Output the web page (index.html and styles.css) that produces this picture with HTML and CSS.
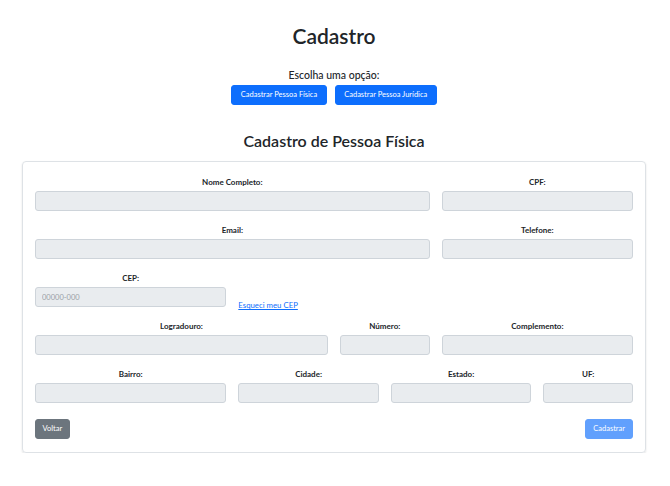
FILE: index.html
```html
<!DOCTYPE html>
<html lang="pt-BR">
<head>
<meta charset="utf-8">
<title>Cadastro</title>
<link rel="stylesheet" href="styles.css">
</head>
<body>
<div class="page">
  <h1 class="title">Cadastro</h1>
  <p class="choose">Escolha uma opção:</p>
  <div class="choices">
    <button class="btn btn-primary">Cadastrar Pessoa Física</button>
    <button class="btn btn-primary">Cadastrar Pessoa Jurídica</button>
  </div>
  <h2 class="subtitle">Cadastro de Pessoa Física</h2>
  <form class="card">
    <div class="grid">
      <div class="field c8"><label>Nome Completo:</label><input class="input" type="text"></div>
      <div class="field c4"><label>CPF:</label><input class="input" type="text"></div>

      <div class="field c8"><label>Email:</label><input class="input" type="text"></div>
      <div class="field c4"><label>Telefone:</label><input class="input" type="text"></div>

      <div class="field c4"><label>CEP:</label><input class="input" type="text" placeholder="00000-000"></div>
      <div class="field c8 linkcell"><a href="#" class="link">Esqueci meu CEP</a></div>

      <div class="field c6"><label>Logradouro:</label><input class="input" type="text"></div>
      <div class="field c2"><label>Número:</label><input class="input" type="text"></div>
      <div class="field c4"><label>Complemento:</label><input class="input" type="text"></div>

      <div class="field c4"><label>Bairro:</label><input class="input" type="text"></div>
      <div class="field c3"><label>Cidade:</label><input class="input" type="text"></div>
      <div class="field c3"><label>Estado:</label><input class="input" type="text"></div>
      <div class="field c2"><label>UF:</label><input class="input" type="text"></div>
    </div>
    <div class="actions">
      <button type="button" class="btn btn-secondary">Voltar</button>
      <button type="button" class="btn btn-primary disabled">Cadastrar</button>
    </div>
  </form>
</div>
</body>
</html>
```
FILE: styles.css
```css
* { box-sizing: border-box; }
html, body { margin: 0; padding: 0; background: #fff; }
body {
  font-family: "Lato", "Noto Sans", sans-serif;
  color: #212529;
}
.page {
  padding: 23px 24px 0 22px;
  display: flex;
  flex-direction: column;
  align-items: center;
}
.title {
  margin: 0;
  font-size: 21px;
  font-weight: 600;
  line-height: 26px;
}
.choose {
  margin: 19px 0 0;
  font-size: 10.5px;
  font-weight: 500;
  line-height: 14px;
}
.choices {
  margin-top: 3px;
  display: flex;
  gap: 8px;
}
.btn {
  font-family: inherit;
  border: 1px solid transparent;
  border-radius: 3px;
  height: 20px;
  padding: 0 8.5px;
  font-size: 7.5px;
  line-height: 18px;
  color: #fff;
  cursor: pointer;
}
.btn-primary { background: #0d6efd; border-color: #0d6efd; }
.btn-primary.disabled { opacity: 0.65; padding: 0 7px; }
.btn-secondary { background: #6c757d; border-color: #6c757d; padding: 0 6.5px; }
.subtitle {
  margin: 25px 0 0;
  font-size: 16px;
  font-weight: 600;
  line-height: 22px;
}
.card {
  align-self: stretch;
  margin-top: 9px;
  border: 1px solid #dee2e6;
  border-radius: 4px;
  box-shadow: 0 1px 2px rgba(0,0,0,0.12);
  padding: 13px 12px 13px;
}
.grid {
  display: grid;
  grid-template-columns: repeat(12, 1fr);
  column-gap: 12px;
  row-gap: 12px;
}
.c2 { grid-column: span 2; }
.c3 { grid-column: span 3; }
.c4 { grid-column: span 4; }
.c6 { grid-column: span 6; }
.c8 { grid-column: span 8; }
.field {
  display: flex;
  flex-direction: column;
  align-items: stretch;
}
.field label {
  text-align: center;
  font-size: 8px;
  font-weight: 700;
  line-height: 12px;
  margin-top: 1px;
  margin-bottom: 3px;
}
.input {
  display: block;
  width: 100%;
  height: 20px;
  background: #e9ecef;
  border: 1px solid #ced4da;
  border-radius: 3px;
  font-family: inherit;
  font-size: 7.5px;
  padding: 0 6px;
  color: #212529;
}
.input::placeholder { color: #9aa0a6; }
.linkcell {
  justify-content: flex-end;
  align-items: flex-start;
}
.link {
  font-size: 7.8px;
  color: #0d6efd;
  text-decoration: underline;
  line-height: 10px;
  margin-bottom: -3px;
}
.actions {
  margin-top: 16px;
  display: flex;
  justify-content: space-between;
}
```
